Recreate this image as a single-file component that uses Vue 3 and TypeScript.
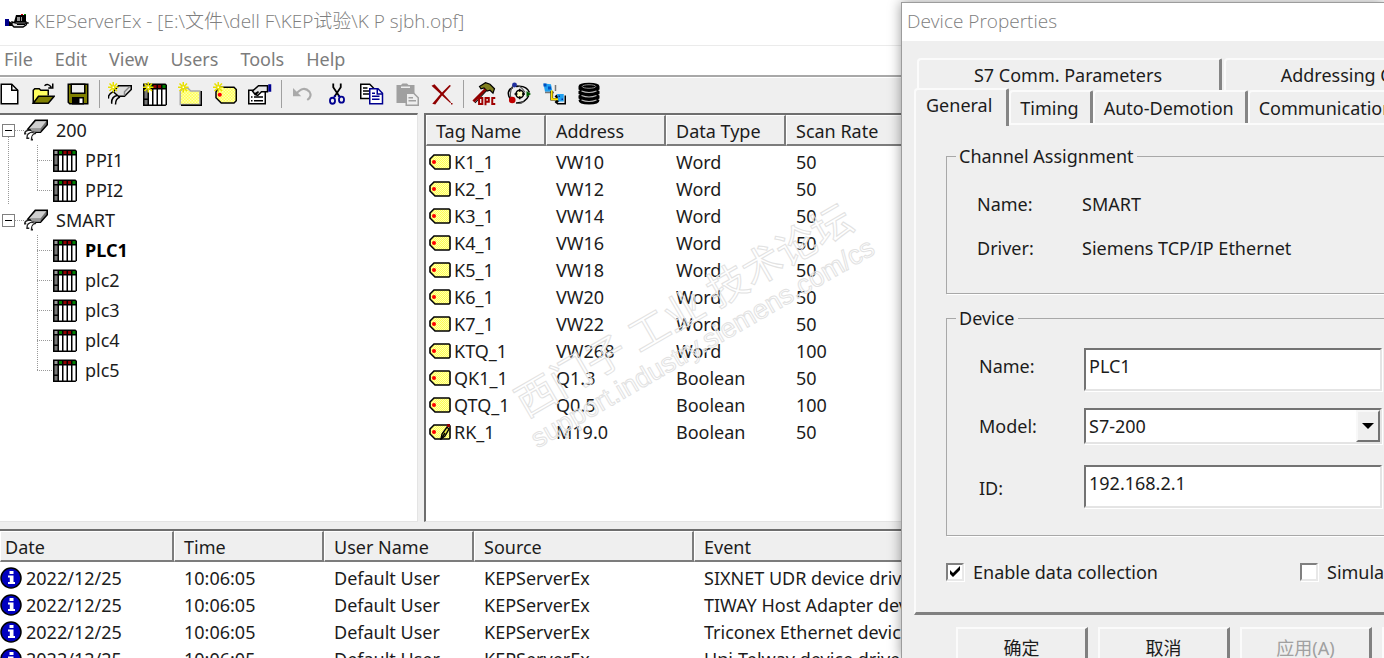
<script setup lang="ts">
import { ref } from 'vue'

interface Tool { id: string; label: string; disabled?: boolean }
interface Channel { name: string; devices: string[] }
interface Tag { name: string; address: string; type: string; rate: number; icon?: string }

const menus = ['File', 'Edit', 'View', 'Users', 'Tools', 'Help']

const toolGroups: Tool[][] = [
  [
    { id: 'new', label: 'New' },
    { id: 'open', label: 'Open' },
    { id: 'save', label: 'Save' },
  ],
  [
    { id: 'new-channel', label: 'New channel' },
    { id: 'new-device', label: 'New device' },
    { id: 'new-group', label: 'New tag group' },
    { id: 'new-tag', label: 'New tag' },
    { id: 'props', label: 'Properties' },
  ],
  [
    { id: 'undo', label: 'Undo', disabled: true },
    { id: 'cut', label: 'Cut' },
    { id: 'copy', label: 'Copy' },
    { id: 'paste', label: 'Paste', disabled: true },
    { id: 'delete', label: 'Delete' },
  ],
  [
    { id: 'opc', label: 'OPC quick client' },
    { id: 'orbit', label: 'Server options' },
    { id: 'network', label: 'Connections' },
    { id: 'database', label: 'Data logger' },
  ],
]

const channels: Channel[] = [
  { name: '200', devices: ['PPI1', 'PPI2'] },
  { name: 'SMART', devices: ['PLC1', 'plc2', 'plc3', 'plc4', 'plc5'] },
]
const selected = ref('PLC1')

const tags: Tag[] = [
  { name: 'K1_1', address: 'VW10', type: 'Word', rate: 50 },
  { name: 'K2_1', address: 'VW12', type: 'Word', rate: 50 },
  { name: 'K3_1', address: 'VW14', type: 'Word', rate: 50 },
  { name: 'K4_1', address: 'VW16', type: 'Word', rate: 50 },
  { name: 'K5_1', address: 'VW18', type: 'Word', rate: 50 },
  { name: 'K6_1', address: 'VW20', type: 'Word', rate: 50 },
  { name: 'K7_1', address: 'VW22', type: 'Word', rate: 50 },
  { name: 'KTQ_1', address: 'VW268', type: 'Word', rate: 100 },
  { name: 'QK1_1', address: 'Q1.3', type: 'Boolean', rate: 50 },
  { name: 'QTQ_1', address: 'Q0.5', type: 'Boolean', rate: 100 },
  { name: 'RK_1', address: 'M19.0', type: 'Boolean', rate: 50, icon: 'tag-edit' },
]

const events = [
  'SIXNET UDR device driver',
  'TIWAY Host Adapter device driver',
  'Triconex Ethernet device driver',
  'Uni-Telway device driver',
]

const deviceName = ref('PLC1')
const model = ref('S7-200')
const deviceId = ref('192.168.2.1')
const collect = ref(true)
const simulate = ref(false)
</script>

<template>
  <div class="desktop">
    <svg class="defs" aria-hidden="true">
      <defs>
        <pattern id="dither" width="2" height="2" patternUnits="userSpaceOnUse">
          <rect width="2" height="2" fill="#ffff52" />
          <rect width="1" height="1" fill="#ffffb0" />
          <rect x="1" y="1" width="1" height="1" fill="#ffffb0" />
        </pattern>
      </defs>
      <symbol id="spark" viewBox="0 0 16 16">
        <path d="M1 1l5 5M6 1L1 6M3.5 0v7M0 3.5h7" stroke="#e8e000" fill="none" />
        <rect x="3" y="3" width="1" height="1" fill="#fff" />
      </symbol>
      <symbol id="new" viewBox="0 0 16 16">
        <path d="M3.5 1.5h7l4 4v9h-11z" fill="#fff" stroke="#000" />
        <path d="M10.5 1.5v4h4" fill="none" stroke="#000" />
      </symbol>
      <symbol id="open" viewBox="0 0 16 16">
        <path d="M1.5 14V5.5l1-1h3l1 1h5V9" fill="#ffff60" stroke="#000" />
        <path d="M1.5 14.2L5 9.5h10.5L11.5 14.2z" fill="#808000" stroke="#000" />
        <path d="M9 2.5q2.5-2 4.500 1M14.500 1v3h-3" fill="none" stroke="#000" />
      </symbol>
      <symbol id="save" viewBox="0 0 16 16">
        <path d="M1.500 1.500h13v13H2.500l-1-1z" fill="#808000" stroke="#000" />
        <path d="M3.500 1.500h9v6h-9z" fill="#efefef" stroke="#000" />
        <path d="M4 10h8v5H4z" />
        <path d="M9 11h2v3H9z" fill="#fff" />
      </symbol>
      <symbol id="channel" viewBox="0 0 16 16">
        <path d="M2.500 7.500L7.500 1.500h8v3l-4.500 5H8z" fill="#707070" stroke="#000" />
        <path d="M3.500 7L8 2.200h6.800L11 7z" fill="#d0d0d0" />
        <path d="M11 7v2.200H5.500L4 7h7" fill="#999" />
        <path d="M4.500 8q-4 0-4 2.500h1M6.500 9.500q-5 0-4.500 4h1.500M8 10q-3 1-3 4.500h1" fill="none" stroke="#222" />
        <path d="M5 10l-2 2M7 11l-1.500 2" stroke="#fff" stroke-width=".7" />
      </symbol>
      <symbol id="new-channel" viewBox="0 0 16 16">
        <path d="M3.500 6.500L7 2.500h8.500v2.500l-4.500 4.500H7z" fill="#ddd" stroke="#000" />
        <path d="M11 9V6.500l3.500-3.500" stroke="#888" fill="none" />
        <path d="M3.500 6.500q-4 2-3 4.500M6 9q-4 1-3.500 5.500M8 10q-3 1-3 5" fill="none" stroke="#000" />
        <use href="#spark" />
      </symbol>
      <symbol id="device" viewBox="0 0 16 16">
        <path d="M0 1h15l1 1v13l-1 1H0z" />
        <path d="M1 2h2v2H1z" fill="#999" />
        <path d="M1 5h2v6H1zM1 12h2v3H1z" fill="#777" />
        <path d="M4 2h2v2H4zM13 2h2v2h-2z" fill="#008000" />
        <path d="M7 2h2v2H7zM10 2h2v2h-2z" fill="#900000" />
        <path d="M4 5h2v10H4zM7 5h2v10H7zM10 5h2v10h-2zM13 5h2v10h-2z" fill="#fff" />
      </symbol>
      <symbol id="new-device" viewBox="0 0 16 16">
        <use href="#device" />
        <use href="#spark" />
      </symbol>
      <symbol id="new-group" viewBox="0 0 16 16">
        <path d="M1.500 15V6l2-2h3l2 2h6v9z" fill="url(#dither)" stroke="#aaa" />
        <path d="M2 15.500h13.500V6" fill="none" stroke="#000" />
        <use href="#spark" />
      </symbol>
      <symbol id="new-tag" viewBox="0 0 16 16">
        <path d="M4.500 3.500h9.500l1.500 1.500v7.500l-1.500 1.500h-8.500L2 10.500V6.500z" fill="url(#dither)" stroke="#000" />
        <circle cx="4.500" cy="8.500" r="1.400" fill="#f00" />
        <use href="#spark" />
      </symbol>
      <symbol id="props" viewBox="0 0 16 16">
        <path d="M.500 5.500h11v9H.500z" fill="#fff" stroke="#000" />
        <path d="M2 10h1M4 10h6M2 12.500h1M4 12.500h6" stroke="#000" />
        <path d="M3 6l4-3.500h6v4H9L6.500 9 5 8.500 7 6.500 4.500 8z" fill="#e8e8e8" stroke="#000" />
        <path d="M13.500 1.500h2v5h-2z" fill="#000090" />
      </symbol>
      <symbol id="undo" viewBox="0 0 16 16">
        <path d="M2 4v5.500h5.500z" fill="#aaa" />
        <path d="M4 8q5-6 9-1.500 2 3-1.500 5.500" fill="none" stroke="#aaa" stroke-width="1.400" />
      </symbol>
      <symbol id="cut" viewBox="0 0 16 16">
        <path d="M5.500 1v2.500l4 6M10.500 1v2.500l-4 6" stroke="#000" fill="none" stroke-width="1.200" />
        <path d="M7 9l-1 1M9 9l1 1" stroke="#000090" stroke-width="1.500" />
        <ellipse cx="5" cy="12.500" rx="1.700" ry="2" fill="none" stroke="#000090" stroke-width="1.200" />
        <ellipse cx="11" cy="11.800" rx="1.700" ry="2" fill="none" stroke="#000090" stroke-width="1.200" />
      </symbol>
      <symbol id="copy" viewBox="0 0 16 16">
        <path d="M.500 1.500h6l2.500 2.500v7H.500z" fill="#fff" stroke="#000" />
        <path d="M2 4h3M2 6h5M2 8h5" stroke="#000" />
        <path d="M6.500 4.500h5.500l3 3v7H6.500z" fill="#fff" stroke="#000090" />
        <path d="M11.500 4.500v3.500h3.500M8 7.500h2M8 9.500h5M8 11.500h5" stroke="#000090" fill="none" />
      </symbol>
      <symbol id="paste" viewBox="0 0 16 16">
        <path d="M1 2h3l1-1h3l1 1h4v12H1z" fill="#a0a0a0" />
        <path d="M4 3.500h6" stroke="#eee" />
        <path d="M7.500 7.500h5l3 3v5h-8z" fill="#eee" stroke="#a0a0a0" />
        <path d="M9 10.500h3M9 12.500h5" stroke="#a0a0a0" />
      </symbol>
      <symbol id="delete" viewBox="0 0 16 16">
        <path d="M1 2.500l2-1 5 5.500 5-5 1 .5-5 5.500 5 5.500-.5.500L8 9l-4.500 6-2-.5L7 8z" fill="#900000" />
        <path d="M14 14h1v1h-1z" fill="#900000" />
      </symbol>
      <symbol id="opc" viewBox="0 0 16 16">
        <path d="M5 3l4-2.500 3 1 3 3-1 3-2-2-2 .500L8 4l-2 .500z" fill="#808020" stroke="#000" stroke-width=".8" />
        <path d="M9 5L1 13" stroke="#900000" stroke-width="2" />
        <path d="M9.500 6L2 14" stroke="#000" stroke-width=".7" />
        <path d="M4.700 10.700h2.200v4h-2.200zM9 15.500v-4.800h2.200v2.500H9M15.500 10.700h-2v4h2" fill="none" stroke="#a00000" stroke-width="1.300" />
      </symbol>
      <symbol id="orbit" viewBox="0 0 16 16">
        <path d="M2 11Q-1 6 4 3.500M6 3q7-1 9 4M14.500 9q-2 5-8.500 5M4 13l-2-2" fill="none" stroke="#000" />
        <path d="M4 2Q1 8 3 11M6 2q4 1 6 5M6 14q3 1 5-1" fill="none" stroke="#555" stroke-width=".8" />
        <circle cx="8.500" cy="8" r="2.500" fill="#ffffc8" stroke="#000" />
        <path d="M8.500 4.500v2M8.500 9.500v2M5 8h2M10 8h2" stroke="#000" />
        <circle cx="5" cy="2" r="1.600" fill="#2030a0" />
        <circle cx="3.500" cy="12" r="2.200" fill="#c00000" />
        <path d="M13 6l3 2-3 2z" fill="#006000" />
      </symbol>
      <symbol id="network" viewBox="0 0 16 16">
        <path d="M1 1l5 .5 1 5H2z" fill="#20a0f0" />
        <path d="M1 1h2v2H1zM4 3h2v2H4z" fill="#0050c0" />
        <path d="M2 7h6M9 2v4" stroke="#777" />
        <path d="M6.500 6v5.500H11M9 9l2.500 2.500L9 14" stroke="#000" stroke-width="1.800" fill="none" />
        <path d="M6.500 5.500v6H11" stroke="#ffe000" stroke-width="1.200" fill="none" />
        <path d="M10 8h4.500v5H11z" fill="#20a0f0" />
        <path d="M11 9h1v1h-1zM13 11h1v1h-1z" fill="#0030a0" />
        <path d="M15.500 9v5.500H10" stroke="#000" fill="none" />
      </symbol>
      <symbol id="database" viewBox="0 0 16 16">
        <path d="M1 3q0-2.500 7-2.500T15 3v2l-1 .5 1 .5v2l-1 .5 1 .5v2l-1 .5 1 .5q0 3-7 3t-7-3l1-.5-1-.5V9l1-.5L1 8V6l1-.5L1 5z" />
        <ellipse cx="8" cy="3" rx="4.500" ry="1.200" fill="none" stroke="#999" stroke-width=".6" />
        <path d="M3 6q5 2 10 0M3 9q5 2 10 0M3 12q5 2 10 0" stroke="#bbb" stroke-width=".7" fill="none" />
      </symbol>
      <symbol id="tag" viewBox="0 0 22 16">
        <path d="M5 1h15l1 1v12l-1 1H6L1 10V5z" fill="url(#dither)" stroke="#000" stroke-width="1.600" />
        <circle cx="5" cy="8" r="2" fill="#f00" />
      </symbol>
      <symbol id="tag-edit" viewBox="0 0 22 16">
        <use href="#tag" />
        <path d="M12 15l1-5 5-7 2 2-4 7z" fill="#e0e040" stroke="#000" stroke-width="1.400" />
        <path d="M12 15l4-6" stroke="#000" stroke-width="1.400" />
        <path d="M18 0h3v3h-3z" fill="#900000" />
      </symbol>
      <symbol id="info" viewBox="0 0 22 22">
        <circle cx="11" cy="11" r="10" fill="#0000c0" stroke="#000" stroke-width="1.500" />
        <path d="M9.500 4h4v3h-4zM8 8.500h5.500V15H15v2H8v-2h1.800v-4.500H8z" fill="#fff" />
      </symbol>
    </svg>

    <main class="app">
      <header class="titlebar">
        <svg class="logo" viewBox="0 0 24 16" aria-hidden="true">
          <path d="M0 6h4v7H0z" fill="#00008a" />
          <path d="M4 8l3 2v3H4zM11 2h10v7H9z" />
          <path d="M12 4h3v4h-3zM16 4h1v4h-1z" fill="#999" />
          <path d="M16 1h2v1h-2z" fill="#c00" /><path d="M19 1h2v1h-2z" fill="#080" />
          <path d="M7 9l4 1h11l-1 2-3 2H9l-2-2z" fill="#ddd" stroke="#000" stroke-width="1.400" />
          <path d="M12 11.500h8M18 8h3v3M22 10h2" stroke="#000" fill="none" />
        </svg>
        <span>KEPServerEx - [E:\文件\dell F\KEP试验\K P sjbh.opf]</span>
      </header>
      <nav class="menubar">
        <button v-for="m in menus" :key="m" type="button">{{ m }}</button>
      </nav>
      <div class="toolbar" role="toolbar">
        <div v-for="(group, i) in toolGroups" :key="i" class="tools">
          <button v-for="t in group" :key="t.id" type="button" :aria-label="t.label" :disabled="t.disabled">
            <svg><use :href="'#' + t.id" /></svg>
          </button>
        </div>
      </div>

      <div class="panes">
        <div class="tree-pane">
          <ul class="tree">
            <li v-for="c in channels" :key="c.name" class="channel">
              <div class="node">
                <button type="button" class="expander" :aria-label="'Collapse ' + c.name"><i></i></button>
                <span class="stub"></span>
                <svg><use href="#channel" /></svg>
                <span class="name">{{ c.name }}</span>
              </div>
              <ul class="devices">
                <li v-for="d in c.devices" :key="d" class="node" :class="{ selected: d === selected }" @click="selected = d">
                  <span class="branch"></span>
                  <svg><use href="#device" /></svg>
                  <span class="name">{{ d }}</span>
                </li>
              </ul>
            </li>
          </ul>
        </div>
        <div class="tag-pane">
          <table class="list">
            <colgroup><col class="c120" /><col class="c120" /><col class="c120" /><col /></colgroup>
            <thead>
              <tr><th>Tag Name</th><th>Address</th><th>Data Type</th><th>Scan Rate</th></tr>
            </thead>
            <tbody>
              <tr v-for="t in tags" :key="t.name">
                <td class="lead"><svg class="tag-icon"><use :href="'#' + (t.icon ?? 'tag')" /></svg>{{ t.name }}</td>
                <td>{{ t.address }}</td>
                <td>{{ t.type }}</td>
                <td>{{ t.rate }}</td>
              </tr>
            </tbody>
          </table>
        </div>
      </div>

      <div class="event-pane">
        <table class="list events">
          <colgroup><col class="c174" /><col class="c150" /><col class="c150" /><col class="c220" /><col /></colgroup>
          <thead>
            <tr><th>Date</th><th>Time</th><th>User Name</th><th>Source</th><th>Event</th></tr>
          </thead>
          <tbody>
            <tr v-for="e in events" :key="e">
              <td class="lead"><svg class="info-icon"><use href="#info" /></svg>2022/12/25</td>
              <td>10:06:05</td>
              <td>Default User</td>
              <td>KEPServerEx</td>
              <td>{{ e }}</td>
            </tr>
          </tbody>
        </table>
      </div>
    </main>

    <div class="watermark" aria-hidden="true">
      <div class="forum">西门子 工业 技术论坛</div>
      <div class="site">support.industry.siemens.com/cs</div>
    </div>

    <section class="dialog" role="dialog" aria-label="Device Properties">
      <header>Device Properties</header>
      <div class="tabs back">
        <button type="button" class="wide">S7 Comm. Parameters</button>
        <button type="button" class="wide">Addressing Options</button>
      </div>
      <div class="tabs front">
        <button type="button" class="active">General</button>
        <button type="button">Timing</button>
        <button type="button">Auto-Demotion</button>
        <button type="button">Communications</button>
      </div>
      <div class="page">
        <fieldset>
          <legend>Channel Assignment</legend>
          <dl>
            <dt>Name:</dt><dd>SMART</dd>
            <dt>Driver:</dt><dd>Siemens TCP/IP Ethernet</dd>
          </dl>
        </fieldset>
        <fieldset>
          <legend>Device</legend>
          <div class="form">
            <label for="dev-name">Name:</label>
            <input id="dev-name" v-model="deviceName" class="field" type="text" />
            <label for="dev-model">Model:</label>
            <div class="combo">
              <select id="dev-model" v-model="model"><option>S7-200</option></select>
              <span class="arrow"><svg viewBox="0 0 12 6"><path d="M0 0h12L6 6z" /></svg></span>
            </div>
            <label for="dev-id">ID:</label>
            <input id="dev-id" v-model="deviceId" class="field" type="text" />
          </div>
        </fieldset>
        <div class="checks">
          <label><input v-model="collect" type="checkbox" /><svg viewBox="0 0 12 12"><path v-if="collect" d="M1 4v4l3 3 7-7V0L4 7z" /></svg>Enable data collection</label>
          <label><input v-model="simulate" type="checkbox" /><svg viewBox="0 0 12 12"></svg>Simulate Device</label>
        </div>
      </div>
      <footer>
        <button type="button">确定</button>
        <button type="button">取消</button>
        <button type="button" disabled>应用(A)</button>
        <button type="button" aria-label="Help"></button>
      </footer>
    </section>
  </div>
</template>

<style>
html, body { margin: 0; overflow: hidden; background: #efefef; }
</style>

<style scoped>
.desktop {
  position: relative;
  height: 100vh;
  overflow: hidden;
  font: 18px/26px "Noto Sans", "Noto Sans CJK SC", sans-serif;
  color: #1c1c1c;
}
.desktop *, .desktop *::before { box-sizing: border-box; }
.defs { position: absolute; width: 0; height: 0; }
button, input, select { font: inherit; color: inherit; margin: 0; padding: 0; border: 0; background: none; border-radius: 0; }
button { white-space: nowrap; }
ul, dl, dd { margin: 0; padding: 0; list-style: none; }

.app { display: flex; flex-direction: column; height: 100%; background: #efefef; }
.titlebar {
  display: flex; align-items: center; gap: 5px; height: 46px; padding: 0 0 4px 5px;
  background: #fff; border-bottom: 1px solid #ebebeb; color: #808080;
  font-family: "Open Sans", "Noto Sans CJK SC", sans-serif; font-size: 19px; font-weight: 300; white-space: pre;
}
.logo { width: 24px; height: 16px; }
.menubar { display: flex; align-items: flex-start; gap: 22px; height: 29px; padding-left: 4px; background: #fff; color: #7c7c7c; }
.toolbar { display: flex; align-items: center; height: 38px; padding-bottom: 2px; border-top: 2px solid #a8a8a8; box-shadow: inset 0 1px #fff; }
.tools { display: flex; }
.tools:first-child { margin-left: -10px; }
.tools + .tools { background: linear-gradient(#a0a0a0, #a0a0a0) 4px 50% / 1px 28px no-repeat; padding-left: 7px; }
.tools button { display: grid; place-items: center; width: 35px; height: 30px; }
.tools svg { width: 24px; height: 24px; }

.panes { display: flex; gap: 6px; height: 409px; flex: none; }
.tree-pane { width: 418px; flex: none; background: #fff; border: solid; border-width: 2px 1px 1px 0; border-color: #6e6e6e #e4e4e4 #e4e4e4; }
.tag-pane { flex: 1; background: #fff; border: solid; border-width: 2px 0 1px 2px; border-color: #6e6e6e #e4e4e4 #e4e4e4 #6e6e6e; }
.node { display: flex; align-items: center; height: 30px; }
.node svg { width: 24px; height: 24px; margin-right: 8px; flex: none; }
.channel > .node { padding-left: 2px; }
.channel:first-child { background: repeating-linear-gradient(#999 0 1px, transparent 1px 2px) 8px 22px / 1px 100% no-repeat; }
.expander { display: grid; place-items: center; width: 13px; height: 13px; border: 1px solid #808080; background: #fff; }
.expander i { width: 7px; height: 1px; background: #000; }
.stub { width: 9px; height: 1px; background: repeating-linear-gradient(90deg, #999 0 1px, transparent 1px 2px); }
.devices { padding-left: 37px; }
.branch {
  width: 16px; height: 100%;
  background:
    repeating-linear-gradient(#999 0 1px, transparent 1px 2px) 0 0 / 1px 100% no-repeat,
    repeating-linear-gradient(90deg, #999 0 1px, transparent 1px 2px) 0 50% / 100% 1px no-repeat;
}
.devices .node:last-child .branch { background-size: 1px 50%, 100% 1px; }
.selected { font-weight: 700; color: #000; }

.list { width: 100%; table-layout: fixed; border-collapse: separate; border-spacing: 0; }
.c120 { width: 120px; } .c174 { width: 174px; } .c150 { width: 150px; } .c220 { width: 220px; }
th {
  height: 31px; padding: 2px 0 0 9px; font-weight: 400; text-align: left; background: #efefef;
  border: solid; border-width: 1px 2px 2px 1px; border-color: #fff #7c7c7c #7c7c7c #fff; line-height: 26px;
}
td { height: 27px; padding: 0 0 0 10px; line-height: 26px; white-space: nowrap; overflow: hidden; }
tbody::before { content: ""; display: block; height: 2px; }
td.lead { padding-left: 3px; }
.tag-icon { width: 22px; height: 16px; margin-right: 3px; vertical-align: -1px; overflow: visible; }
.event-pane { flex: 1; margin-top: 7px; overflow: hidden; background: #fff; border-top: 2px solid #6e6e6e; }
.events td.lead { padding-left: 0; }
.events th:first-child { padding-left: 4px; }
.info-icon { width: 22px; height: 22px; margin-right: 4px; vertical-align: -4px; }

.watermark {
  position: absolute; left: 486px; top: 285px; width: 410px; text-align: center; white-space: pre;
  transform: rotate(-30deg); color: rgba(255, 255, 255, .3); -webkit-text-stroke: 1px #e2e2e2; pointer-events: none;
}
.forum { font-size: 40px; line-height: 46px; }
.site { font: 27px/30px "Liberation Sans", sans-serif; }

.dialog {
  position: absolute; left: 901px; top: 2px; right: 0; bottom: 0; overflow: hidden; background: #efefef;
  border: solid #9c9c9c; border-width: 1px 0 0 1px; box-shadow: 0 0 12px rgba(0, 0, 0, .4);
}
.dialog header { height: 38px; padding-left: 5px; line-height: 36px; background: #fff; color: #808080; font-family: "Open Sans", sans-serif; font-size: 19px; font-weight: 300; }
.tabs { display: flex; }
.tabs button { flex: none; height: 32px; padding: 0 10px 0 8px; border: solid; border-width: 2px 3px 0 2px; border-color: #fbfbfb #858585 #fbfbfb #fbfbfb; border-radius: 4px 2px 0 0; background: #efefef; }
.tabs.back { margin-top: 17px; padding-left: 15px; gap: 2px; }
.tabs .wide { width: 305px; }
.tabs .wide + .wide { padding-right: 32px; }
.tabs.front { padding-left: 12px; align-items: flex-end; }
.tabs.front button { height: 33px; padding: 0 11px 0 9px; }
.tabs.front .active { height: 38px; margin: -4px 0 -3px; padding: 0 14px 6px 10px; position: relative; z-index: 1; }
.page { height: 492px; margin: 0 -40px 0 12px; padding: 19px 0 0 30px; border: solid; border-width: 2px 0 3px 2px; border-color: #fbfbfb #fbfbfb #808080; }
fieldset { min-width: 0; margin: 0 0 12px; padding: 0 0 0 30px; border: 1px solid #a8a8a8; box-shadow: 1px 1px #fff; }
legend { margin-left: -21px; padding: 0 3px; line-height: 24px; background: #efefef; }
dl { display: grid; grid-template-columns: 105px 1fr; row-gap: 18px; padding: 23px 0 32px; }
.form { display: grid; grid-template-columns: 105px 1fr; align-items: center; row-gap: 17px; padding: 18px 41px 27px 2px; }
.field, .combo { width: 100%; background: #fff; border: 2px solid; border-color: #737373 #e4e4e4 #e4e4e4 #737373; box-shadow: 1px 1px #fff; }
.field { height: 43px; padding: 0 3px 8px; }
.form label:nth-of-type(1) { padding-bottom: 8px; }
.form label:nth-of-type(2) { padding-bottom: 4px; }
.form label:nth-of-type(3) { padding-top: 2px; }
.combo { display: flex; height: 36px; margin-bottom: 4px; }
.combo select { flex: 1; padding: 0 3px; appearance: none; outline: 0; }
.arrow { display: grid; place-items: center; width: 24px; border: 2px solid; border-color: #f8f8f8 #737373 #737373 #f8f8f8; background: #efefef; pointer-events: none; }
.arrow svg { width: 12px; height: 6px; }
.checks { display: grid; grid-template-columns: 354px 1fr; padding-top: 11px; white-space: nowrap; }
.checks label { display: flex; align-items: center; gap: 9px; position: relative; }
.checks input { position: absolute; width: 18px; height: 18px; opacity: 0; }
.checks svg { width: 18px; height: 18px; padding: 1px; background: #fff; border: 2px solid; border-color: #808080 #e8e8e8 #e8e8e8 #808080; box-shadow: 1px 1px #fff; }
footer { display: flex; gap: 10px; padding: 12px 0 0 54px; }
footer button { flex: none; width: 132px; height: 42px; border: solid; border-width: 2px 3px 3px 2px; border-color: #fbfbfb #808080 #808080 #fbfbfb; background: #efefef; }
footer button:disabled { color: #a0a0a0; }
</style>
